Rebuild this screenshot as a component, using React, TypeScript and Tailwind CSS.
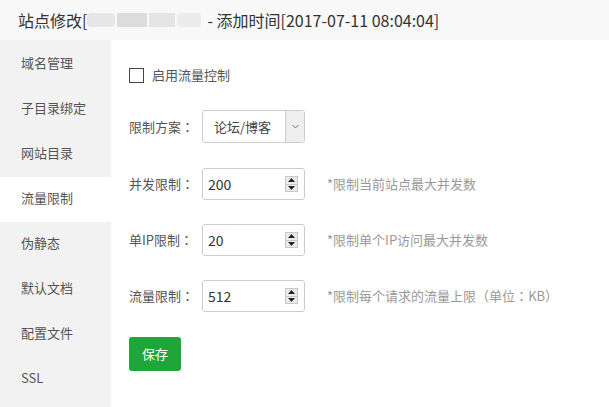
import React from 'react';

const menu = ['域名管理', '子目录绑定', '网站目录', '流量限制', '伪静态', '默认文档', '配置文件', 'SSL'];

// full-width punctuation centred, as in the reference font
const P: React.FC<{ c: string }> = ({ c }) => (
  <span style={{ fontFamily: '"Noto Sans CJK TC", sans-serif' }}>{c}</span>
);

const Spinner: React.FC = () => (
  <div className="flex h-[16px] w-[13px] flex-col border border-[#c8c8c8] bg-[#ececec]">
    <div className="flex flex-1 items-center justify-center border-b border-[#c8c8c8]">
      <svg width="7" height="4" viewBox="0 0 7 4"><path d="M3.5 0L7 4H0z" fill="#222" /></svg>
    </div>
    <div className="flex flex-1 items-center justify-center">
      <svg width="7" height="4" viewBox="0 0 7 4"><path d="M0 0h7L3.5 4z" fill="#222" /></svg>
    </div>
  </div>
);

const NumberRow: React.FC<{ label: string; value: string; hint: React.ReactNode }> = ({ label, value, hint }) => (
  <div className="flex h-[32px] items-center">
    <span className="w-[73px] text-[13px] text-[#555]">
      {label}
      <P c="：" />
    </span>
    <div className="flex h-[32px] w-[103px] items-center rounded-[3px] border border-[#ccc] bg-white pl-[5px] pr-[6px]">
      <input
        className="w-0 flex-1 bg-transparent text-[14px] text-[#333] outline-none"
        defaultValue={value}
      />
      <Spinner />
    </div>
    <span className="ml-[22px] text-[13px] text-[#999]">{hint}</span>
  </div>
);

export default function App() {
  return (
    <div
      className="flex h-[407px] w-[609px] flex-col overflow-hidden bg-white"
      style={{ fontFamily: '"Noto Sans CJK SC", "Noto Sans", sans-serif' }}
    >
      <div className="flex h-[40px] shrink-0 items-center bg-[#f8f8f8] pl-[18px] text-[16px] text-[#333]">
        <span>站点修改[</span>
        <span className="flex h-[18px] items-center gap-[2px]">
          <span className="h-[14px] w-[28px] rounded-sm bg-[#e6e6e6]" />
          <span className="h-[14px] w-[30px] bg-[#dcdcdc]" />
          <span className="h-[14px] w-[26px] bg-[#e4e4e4]" />
          <span className="h-[14px] w-[24px] rounded-sm bg-[#ececec]" />
        </span>
        <span className="ml-[6px]">- 添加时间[2017-07-11 08:04:04]</span>
      </div>
      <div className="flex flex-1">
        <div className="w-[111px] shrink-0 bg-[#f2f2f2] pt-[2px]">
          {menu.map((m) => (
            <div
              key={m}
              className={`flex h-[45px] items-center pb-[3px] pl-[21px] text-[13px] text-[#555] ${m === '流量限制' ? 'bg-white' : ''}`}
            >
              {m}
            </div>
          ))}
        </div>
        <div className="flex flex-1 flex-col pl-[18px] pt-[25px]">
          <label className="flex h-[20px] items-center gap-[8px] text-[13px] text-[#555]">
            <span className="h-[15px] w-[15px] border border-[#444] bg-white" />
            启用流量控制
          </label>
          <div className="mt-[25px] flex h-[33px] items-center">
            <span className="w-[73px] text-[13px] text-[#555]">
              限制方案<P c="：" />
            </span>
            <div className="flex h-[33px] w-[103px] rounded-[3px] border border-[#ccc] bg-white">
              <span className="flex flex-1 items-center pl-[11px] text-[13px] text-[#444]">论坛/博客</span>
              <span className="flex w-[19px] items-center justify-center border-l border-[#ccc] bg-[#eee]">
                <svg width="7" height="5" viewBox="0 0 7 5"><path d="M0.5 1L3.5 4L6.5 1" stroke="#777" fill="none" strokeWidth="1" /></svg>
              </span>
            </div>
          </div>
          <div className="mt-[25px] flex flex-col gap-[24px]">
            <NumberRow label="并发限制" value="200" hint="*限制当前站点最大并发数" />
            <NumberRow label="单IP限制" value="20" hint="*限制单个IP访问最大并发数" />
            <NumberRow
              label="流量限制"
              value="512"
              hint={
                <>
                  *限制每个请求的流量上限<P c="（" />单位<P c="：" />KB<P c="）" />
                </>
              }
            />
          </div>
          <button className="mt-[25px] flex h-[34px] w-[52px] items-center justify-center rounded-[3px] bg-[#20a53a] text-[13px] text-white">
            保存
          </button>
        </div>
      </div>
    </div>
  );
}
